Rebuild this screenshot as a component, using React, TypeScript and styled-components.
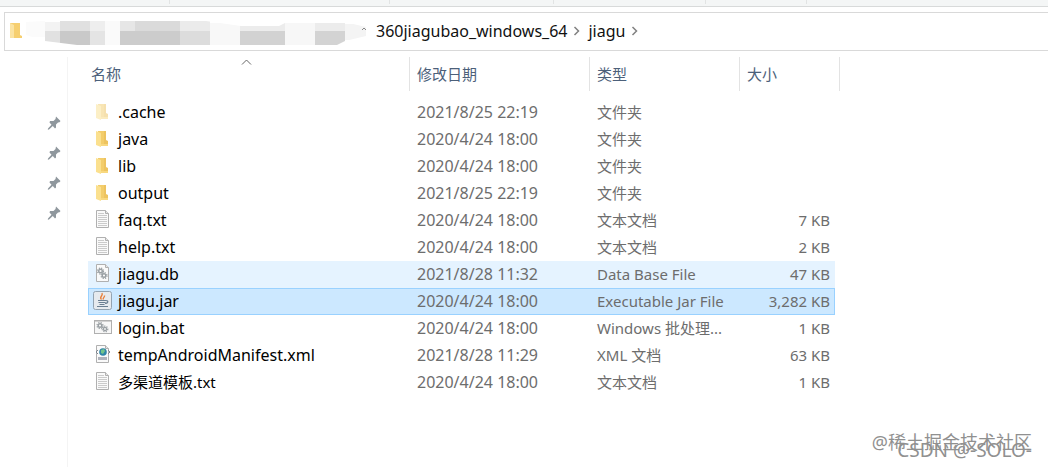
import React from "react";
import styled, { createGlobalStyle, css } from "styled-components";

const Global = createGlobalStyle`
  * { box-sizing: border-box; }
  body {
    margin: 0;
    background: #fff;
    color: #000;
    font: 15px/20px "Noto Sans", "Noto Sans CJK SC", sans-serif;
  }
`;

const Explorer = styled.div`
  position: relative;
  display: flex;
  flex-direction: column;
  min-height: 100vh;
  overflow: hidden;
`;

const Ribbon = styled.div`
  display: grid;
  grid-template-columns: 170px 220px 164px 152px 101px 1fr;
  flex: none;
  height: 7px;
  background: #f4f6f6;
  border-bottom: 1px solid #d8dada;
`;

const RibbonGroup = styled.div`
  height: 4px;
  border-right: 1px solid #e2e4e4;
`;

const AddressBar = styled.nav`
  display: flex;
  align-items: center;
  flex: none;
  height: 39px;
  margin: 5px 0 0 4px;
  padding-left: 4px;
  border: 1px solid #d9d9d9;
  border-right: 0;
`;

const Redacted = styled.svg`
  flex: none;
  margin: 0 2px 0 0;
`;

const Crumb = styled.a`
  padding-bottom: 2px;
  color: #111;
  font-size: 16px;
  text-decoration: none;
  white-space: nowrap;
`;

const Chevron = styled.svg`
  flex: none;
  margin: 0 8px 2px 6px;
`;

const Body = styled.div`
  display: flex;
  flex: 1;
  padding-top: 6px;
`;

const QuickAccess = styled.aside`
  display: flex;
  flex: none;
  flex-direction: column;
  align-items: flex-end;
  gap: 16px;
  width: 68px;
  padding: 59px 6px 0 0;
  border-right: 1px solid #f4f4f4;
`;

const Content = styled.main`
  flex: 1;
  min-width: 0;
  padding-left: 20px;
`;

const Files = styled.table`
  border-collapse: separate;
  border-spacing: 0;
  table-layout: fixed;
  width: 752px;
`;

const HeadCell = styled.th<{ $first?: boolean }>`
  position: relative;
  height: 34px;
  padding: 0 0 0 ${(p) => (p.$first ? 3 : 7)}px;
  border-right: 1px solid #e3e3e3;
  color: #4c607a;
  font-weight: 400;
  text-align: left;
`;

const SortMark = styled.svg`
  position: absolute;
  top: 2px;
  left: 50%;
  margin-left: -8px;
`;

const Spacer = styled.tr`
  height: 8px;
`;

const Cell = styled.td`
  height: 27px;
  padding: 0 6px 2px 7px;
  color: #6d6d6d;
  white-space: nowrap;
`;

const DateCell = styled(Cell)`
  font-size: 16px;
`;

const SizeCell = styled(Cell)`
  padding-right: 5px;
  text-align: right;
`;

const NameCell = styled(Cell)`
  padding-left: 4px;
  color: #000;
  font-size: 16px;
`;

const Han = styled.span`
  font-size: 15px;
`;

const Row = styled.tr<{ $state?: "hover" | "selected" }>`
  ${(p) => p.$state === "hover" && css`
    ${Cell} { background: #e5f3ff; }
  `}
  ${(p) => p.$state === "selected" && css`
    ${Cell} {
      padding-bottom: 1px;
      background: #cce8ff;
      border: solid #99d1ff;
      border-width: 1px 0;
    }
    ${NameCell} { border-left-width: 1px; padding-left: 3px; }
    ${SizeCell} { border-right-width: 1px; padding-right: 4px; }
  `}
`;

const FileLabel = styled.div`
  display: flex;
  align-items: center;
  gap: 4px;
`;

const Icon = styled.svg`
  flex: none;
`;

const Watermark = styled.div`
  position: absolute;
  right: 16px;
  bottom: 12px;
  color: #909090;
  font-size: 18px;
  line-height: 26px;
  white-space: nowrap;
`;

const WatermarkSub = styled(Watermark)`
  bottom: 4px;
  font-size: 19px;
`;

type Kind = "faded" | "folder" | "text" | "db" | "jar" | "bat" | "xml";

const Gear = ({ x, y, r }: { x: number; y: number; r: number }) => (
  <g fill="none" stroke="#9aa0a4">
    <circle cx={x} cy={y} r={r} strokeWidth="1.4" />
    <circle cx={x} cy={y} r={r + 1.2} strokeWidth="1.2" strokeDasharray="1.2 1.2" />
  </g>
);

const FolderShape = () => (
  <>
    <path d="M6 3h7v14H6z" fill="#f3cd6b" />
    <path d="M12 3h2v9l2 1v5h-4z" fill="#edc35f" />
    <path d="M4 3l5 2v14l-5-2z" fill="#fbe08e" />
    <path d="M9 16h7v2H9z" fill="#f8d87f" />
  </>
);

const Page = () => (
  <>
    <path d="M4.500 1.500h9l3 3v14h-12z" fill="#fafafa" stroke="#b0b0b0" />
    <path d="M13.500 1.500v3h3" fill="#e6e6e6" stroke="#b0b0b0" />
  </>
);

const FileIcon = ({ kind }: { kind: Kind }) => (
  <Icon width="22" height="22" viewBox="0 0 22 22" aria-hidden="true">
    {(kind === "folder" || kind === "faded") && (
      <g opacity={kind === "faded" ? 0.5 : 1}><FolderShape /></g>
    )}
    {kind === "text" && (
      <>
        <Page />
        <path d="M6 4.500h6M6 6.500h9M6 8.500h9M6 10.500h9M6 12.500h9M6 14.500h9M6 16.500h9" stroke="#cbcbcb" />
      </>
    )}
    {kind === "db" && (
      <>
        <Page />
        <Gear x={8.5} y={8} r={1.8} />
        <Gear x={12} y={12.5} r={1.8} />
      </>
    )}
    {kind === "jar" && (
      <>
        <rect x="1.500" y="1.500" width="18" height="18" rx="2" fill="#e6eaee" stroke="#93a3b1" />
        <path d="M9.500 9.500c-3-2.500 2-3.500.5-6.500M11.500 9.500c-1.500-1.500 1.500-2 1-4" fill="none" stroke="#e8803c" strokeWidth="1.400" />
        <path d="M6 10.500h8M6.500 12.500h7M7.500 14.500h5M5 16.500h11M14 10.500c3 0 2 3-1 3" fill="none" stroke="#6b7f92" strokeWidth="1.200" />
      </>
    )}
    {kind === "bat" && (
      <>
        <rect x="2.500" y="3.500" width="17" height="13" fill="#f7f7f7" stroke="#b0b0b0" />
        <path d="M3 4.500h16" stroke="#d0d0d0" />
        <Gear x={8} y={8.5} r={1.8} />
        <Gear x={13} y={12} r={1.6} />
      </>
    )}
    {kind === "xml" && (
      <>
        <Page />
        <circle cx="11" cy="8" r="3.800" fill="#3186a8" />
        <path d="M9 6l3-1 1 2-2 3-2-1z" fill="#72c48a" />
        <path d="M6 6L4 8l2 2M16 6l2 2-2 2" fill="none" stroke="#7f8791" />
        <path d="M6 14.500h9" stroke="#b0b3bc" strokeWidth="3" />
      </>
    )}
  </Icon>
);

const Pin = () => (
  <svg width="14" height="14" viewBox="0 0 14 14" aria-hidden="true">
    <path d="M9 0.500l4.500 4.500-1 1.200-1.500.3-2 2v3L8 12.500 5.800 10 2 13.500 0.800 13.800 1 12.500 4.500 8.700 2.500 6.500l.5-1.500h3.500l2-2z" fill="#8f979d" />
  </svg>
);

const Separator = () => (
  <Chevron width="7" height="10" viewBox="0 0 7 10" aria-hidden="true">
    <path d="M1.500 1l4 4-4 4" fill="none" stroke="#808080" strokeWidth="1.500" />
  </Chevron>
);

type Block = [x: number, y: number, w: number, h: number, fill: string];

const mosaic: Block[] = [
  [17, 8, 19, 16, "#fbfbfb"],
  [36, 9, 15, 9, "#f3f3f3"], [36, 18, 15, 12, "#e1e1e1"],
  [51, 8, 30, 10, "#e0e0e0"], [51, 18, 30, 15, "#c9c9c9"],
  [81, 8, 15, 10, "#eeeeee"], [81, 18, 15, 15, "#e4e4e4"],
  [96, 8, 15, 25, "#fafafa"],
  [111, 8, 15, 10, "#e6e6e6"], [126, 8, 45, 10, "#dadada"],
  [111, 18, 60, 15, "#cccccc"],
  [171, 8, 30, 10, "#ebebeb"], [171, 18, 30, 15, "#dcdcdc"],
  [201, 10, 30, 23, "#f8f8f8"],
  [231, 10, 45, 8, "#ececec"], [231, 18, 45, 15, "#d2d2d2"],
  [276, 10, 30, 22, "#f7f7f7"],
  [306, 10, 30, 8, "#ececec"], [306, 18, 30, 15, "#d3d3d3"],
  [336, 11, 21, 16, "#f4f4f4"],
];

type File = {
  name: React.ReactNode;
  date: string;
  type: string;
  size?: string;
  kind: Kind;
  state?: "hover" | "selected";
};

const files: File[] = [
  { name: ".cache", date: "2021/8/25 22:19", type: "文件夹", kind: "faded" },
  { name: "java", date: "2020/4/24 18:00", type: "文件夹", kind: "folder" },
  { name: "lib", date: "2020/4/24 18:00", type: "文件夹", kind: "folder" },
  { name: "output", date: "2021/8/25 22:19", type: "文件夹", kind: "folder" },
  { name: "faq.txt", date: "2020/4/24 18:00", type: "文本文档", size: "7 KB", kind: "text" },
  { name: "help.txt", date: "2020/4/24 18:00", type: "文本文档", size: "2 KB", kind: "text" },
  { name: "jiagu.db", date: "2021/8/28 11:32", type: "Data Base File", size: "47 KB", kind: "db", state: "hover" },
  { name: "jiagu.jar", date: "2020/4/24 18:00", type: "Executable Jar File", size: "3,282 KB", kind: "jar", state: "selected" },
  { name: "login.bat", date: "2020/4/24 18:00", type: "Windows 批处理...", size: "1 KB", kind: "bat" },
  { name: "tempAndroidManifest.xml", date: "2021/8/28 11:29", type: "XML 文档", size: "63 KB", kind: "xml" },
  { name: <Han>多渠道模板.txt</Han>, date: "2020/4/24 18:00", type: "文本文档", size: "1 KB", kind: "text" },
];

export default function App() {
  return (
    <Explorer>
      <Global />
      <Ribbon>
        <RibbonGroup /><RibbonGroup /><RibbonGroup /><RibbonGroup /><RibbonGroup />
      </Ribbon>
      <AddressBar aria-label="Path">
        <Redacted width="365" height="37" viewBox="0 0 365 37" aria-hidden="true">
          <path d="M1 10h10v12l2 1v2H1z" fill="#f6cf70" />
          <path d="M1 10l4 2v13H1z" fill="#fbe3a2" />
          <clipPath id="smear">
            <path d="M17 9L51 7H190L232 13L270 13L276 10H340L357 14V23L336 28L328 32H68L36 28L17 22z" />
          </clipPath>
          <g clipPath="url(#smear)">
            {mosaic.map(([x, y, w, h, fill]) => (
              <rect key={`${x}-${y}`} x={x} y={y} width={w} height={h} fill={fill} />
            ))}
          </g>
          <path d="M353 17l2-2 2 2" fill="none" stroke="#888" />
        </Redacted>
        <Crumb href="#windows">360jiagubao_windows_64</Crumb>
        <Separator />
        <Crumb href="#jiagu">jiagu</Crumb>
        <Separator />
      </AddressBar>
      <Body>
        <QuickAccess aria-label="Quick access">
          <Pin /><Pin /><Pin /><Pin />
        </QuickAccess>
        <Content>
          <Files>
            <colgroup>
              <col style={{ width: 322 }} />
              <col style={{ width: 180 }} />
              <col style={{ width: 150 }} />
              <col style={{ width: 95 }} />
              <col style={{ width: 5 }} />
            </colgroup>
            <thead>
              <tr>
                <HeadCell $first>
                  名称
                  <SortMark width="11" height="6" viewBox="0 0 11 6" aria-hidden="true">
                    <path d="M1 5.500l4.500-4.500 4.500 4.500" fill="none" stroke="#666" />
                  </SortMark>
                </HeadCell>
                <HeadCell>修改日期</HeadCell>
                <HeadCell>类型</HeadCell>
                <HeadCell colSpan={2}>大小</HeadCell>
              </tr>
            </thead>
            <tbody>
              <Spacer />
              {files.map((f, i) => (
                <Row key={i} $state={f.state}>
                  <NameCell>
                    <FileLabel>
                      <FileIcon kind={f.kind} />
                      {f.name}
                    </FileLabel>
                  </NameCell>
                  <DateCell>{f.date}</DateCell>
                  <Cell>{f.type}</Cell>
                  <SizeCell>{f.size}</SizeCell>
                </Row>
              ))}
            </tbody>
          </Files>
        </Content>
      </Body>
      <Watermark>@稀土掘金技术社区</Watermark>
      <WatermarkSub>CSDN @-SOLO-</WatermarkSub>
    </Explorer>
  );
}
